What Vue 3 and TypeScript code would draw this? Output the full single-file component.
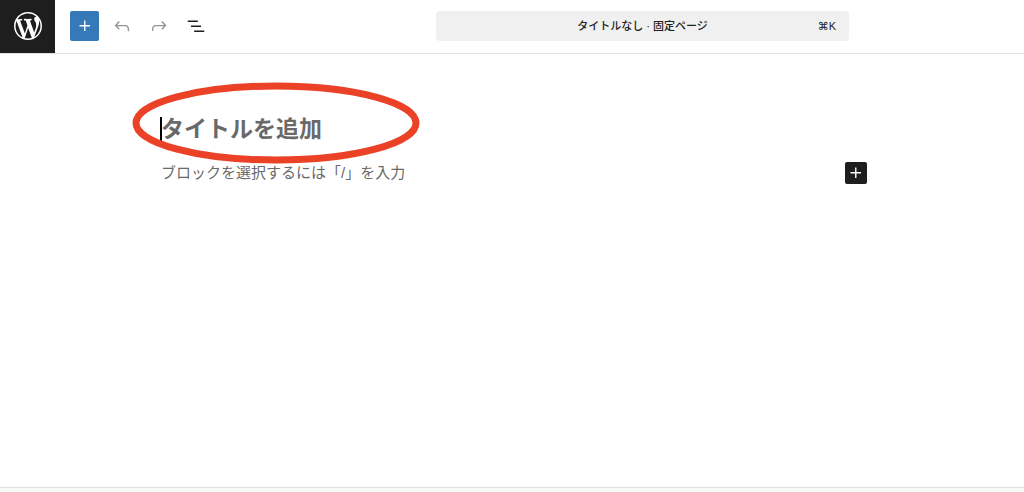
<script setup lang="ts">
import { ref } from 'vue'

const title = ref('')
const block = ref('')

const tools = [
  {
    name: 'undo',
    label: '元に戻す',
    disabled: true,
    path: 'M18.3 11.7c-.6-.6-1.4-.9-2.3-.9H6.7l2.9-3.3-1.1-1-4.5 5L8.5 16l1-1-2.7-2.7H16c.5 0 .9.2 1.3.5 1 1 1 3.4 1 4.5v.3h1.5v-.2c0-1.5 0-4.3-1.5-5.7z',
  },
  {
    name: 'redo',
    label: 'やり直す',
    disabled: true,
    path: 'M15.6 6.5l-1.1 1 2.9 3.3H8c-.9 0-1.7.3-2.3.9-1.4 1.5-1.4 4.2-1.4 5.6v.2h1.5v-.3c0-1.1 0-3.5 1-4.5.3-.3.7-.5 1.3-.5h9.2L14.5 15l1.1 1.1 4.6-4.6-4.6-5z',
  },
  {
    name: 'overview',
    label: 'ドキュメント概観',
    disabled: false,
    path: 'M3 6h11v1.5H3V6Zm3.5 5.5h11V13h-11v-1.5ZM21 17H10v1.5h11V17Z',
  },
]
const plusPath = 'M11 12.5V17.5H12.5V12.5H17.5V11H12.5V6H11V11H6V12.5H11Z'
</script>

<template>
  <div class="editor">
    <header class="bar">
      <a class="logo" href="#" aria-label="WordPress">
        <svg viewBox="0 0 20 20" aria-hidden="true">
          <path
            d="M20 10c0-5.51-4.49-10-10-10C4.48 0 0 4.49 0 10c0 5.52 4.48 10 10 10 5.51 0 10-4.48 10-10zM7.78 15.37L4.37 6.22c.55-.02 1.17-.08 1.17-.08.5-.06.44-1.13-.06-1.11 0 0-1.45.11-2.37.11-.18 0-.37 0-.58-.01C4.12 2.69 6.87 1.11 10 1.11c2.33 0 4.45.87 6.05 2.34-.68-.11-1.65.39-1.65 1.58 0 .74.45 1.36.9 2.1.35.61.55 1.36.55 2.46 0 1.49-1.4 5-1.4 5l-3.03-8.37c.54-.02.82-.17.82-.17.5-.05.44-1.25-.06-1.22 0 0-1.44.12-2.38.12-.87 0-2.33-.12-2.33-.12-.5-.03-.56 1.2-.06 1.22l.92.08 1.26 3.41zM17.41 10c.24-.64.74-1.87.43-4.25.7 1.29 1.05 2.71 1.05 4.25 0 3.29-1.73 6.24-4.4 7.78.97-2.59 1.94-5.2 2.92-7.78zM6.1 18.09C3.12 16.65 1.11 13.53 1.11 10c0-1.3.23-2.48.72-3.59C3.25 10.3 4.67 14.2 6.1 18.09zm4.03-6.63l2.58 6.98c-.86.29-1.76.45-2.71.45-.79 0-1.57-.11-2.29-.33.81-2.38 1.62-4.74 2.42-7.1z"
          />
        </svg>
      </a>
      <div class="tools">
        <button class="square inserter" type="button" aria-label="ブロック挿入ツール">
          <svg viewBox="0 0 24 24" aria-hidden="true"><path :d="plusPath" /></svg>
        </button>
        <button
          v-for="tool in tools"
          :key="tool.name"
          class="square"
          type="button"
          :aria-label="tool.label"
          :disabled="tool.disabled"
        >
          <svg viewBox="0 0 24 24" aria-hidden="true"><path :d="tool.path" /></svg>
        </button>
      </div>
      <button class="command" type="button">
        <span class="command-name">タイトルなし · 固定ページ</span>
        <span class="shortcut">⌘K</span>
      </button>
    </header>

    <main class="canvas">
      <div class="title-row">
        <input v-model="title" class="title" type="text" placeholder="タイトルを追加" aria-label="タイトルを追加" />
        <span class="caret"></span>
        <svg class="ring" viewBox="0 0 288 82" aria-hidden="true">
          <ellipse cx="144" cy="41" rx="140" ry="37" />
        </svg>
      </div>
      <div class="block-row">
        <input
          v-model="block"
          class="block"
          type="text"
          placeholder="ブロックを選択するには「/」を入力"
          aria-label="ブロックを選択するには「/」を入力"
        />
        <button class="add" type="button" aria-label="ブロックを追加">
          <svg viewBox="0 0 24 24" aria-hidden="true"><path :d="plusPath" /></svg>
        </button>
      </div>
    </main>
    <footer class="foot"></footer>
  </div>
</template>

<style>
body {
  margin: 0;
  background: #fff;
}
</style>

<style scoped>
.editor {
  display: flex;
  flex-direction: column;
  min-height: 100vh;
  font-family: "Liberation Sans", "Noto Sans CJK JP", sans-serif;
  color: #1e1e1e;
}

button,
input {
  margin: 0;
  padding: 0;
  border: 0;
  font-family: inherit;
  color: inherit;
  background: none;
}

svg {
  display: block;
  fill: currentColor;
}

.bar {
  display: flex;
  align-items: center;
  height: 53px;
  padding-right: 175px;
  border-bottom: 1px solid #e0e0e0;
}

.logo {
  display: flex;
  align-items: center;
  justify-content: center;
  align-self: stretch;
  width: 55px;
  padding-bottom: 2px;
  box-sizing: border-box;
  color: #fff;
  background: #1e1e1e;
}

.logo svg {
  width: 28px;
  height: 28px;
}

.tools {
  display: flex;
  gap: 8px;
  padding: 0 15px;
  margin-bottom: 2px;
}

.square {
  display: flex;
  align-items: center;
  justify-content: center;
  width: 29px;
  height: 30px;
  border-radius: 2px;
}

.square svg,
.add svg {
  width: 22px;
  height: 22px;
}

.square:disabled {
  color: #949494;
}

.inserter {
  color: #fff;
  background: #3579b8;
}

.command {
  display: grid;
  grid-template-columns: 1fr auto 1fr;
  align-items: center;
  flex: 0 1 413px;
  height: 30px;
  margin: 0 0 2px auto;
  padding: 0 13px;
  border-radius: 4px;
  font-size: 11px;
  font-weight: 500;
  line-height: 16px;
  background: #f0f0f0;
}

.command-name {
  grid-column: 2;
}

.shortcut {
  font-family: "Liberation Sans", "DejaVu Sans", sans-serif;
  text-align: right;
}

.canvas {
  flex: 1;
  padding: 57px 157px 0 161px;
}

.title-row {
  position: relative;
}

.title {
  display: block;
  width: 100%;
  height: 36px;
  font-size: 23px;
  font-weight: 700;
}

.title::placeholder,
.block::placeholder {
  color: #696969;
  opacity: 1;
}

.caret {
  position: absolute;
  top: 6px;
  left: -1px;
  width: 2px;
  height: 25px;
  background: #000;
}

.ring {
  position: absolute;
  top: -29px;
  left: -29px;
  width: 288px;
  height: 82px;
  fill: none;
  stroke: #eb4126;
  stroke-width: 7px;
  pointer-events: none;
}

.block-row {
  display: flex;
  align-items: flex-start;
  margin-top: 15px;
}

.block {
  flex: 1;
  min-width: 0;
  height: 20px;
  font-size: 15px;
}

.add {
  display: flex;
  align-items: center;
  justify-content: center;
  width: 22px;
  height: 22px;
  border-radius: 2px;
  color: #fff;
  background: #1e1e1e;
}

.foot {
  height: 4px;
  border-top: 1px solid #e0e0e0;
  background: #f8f8f8;
}
</style>
